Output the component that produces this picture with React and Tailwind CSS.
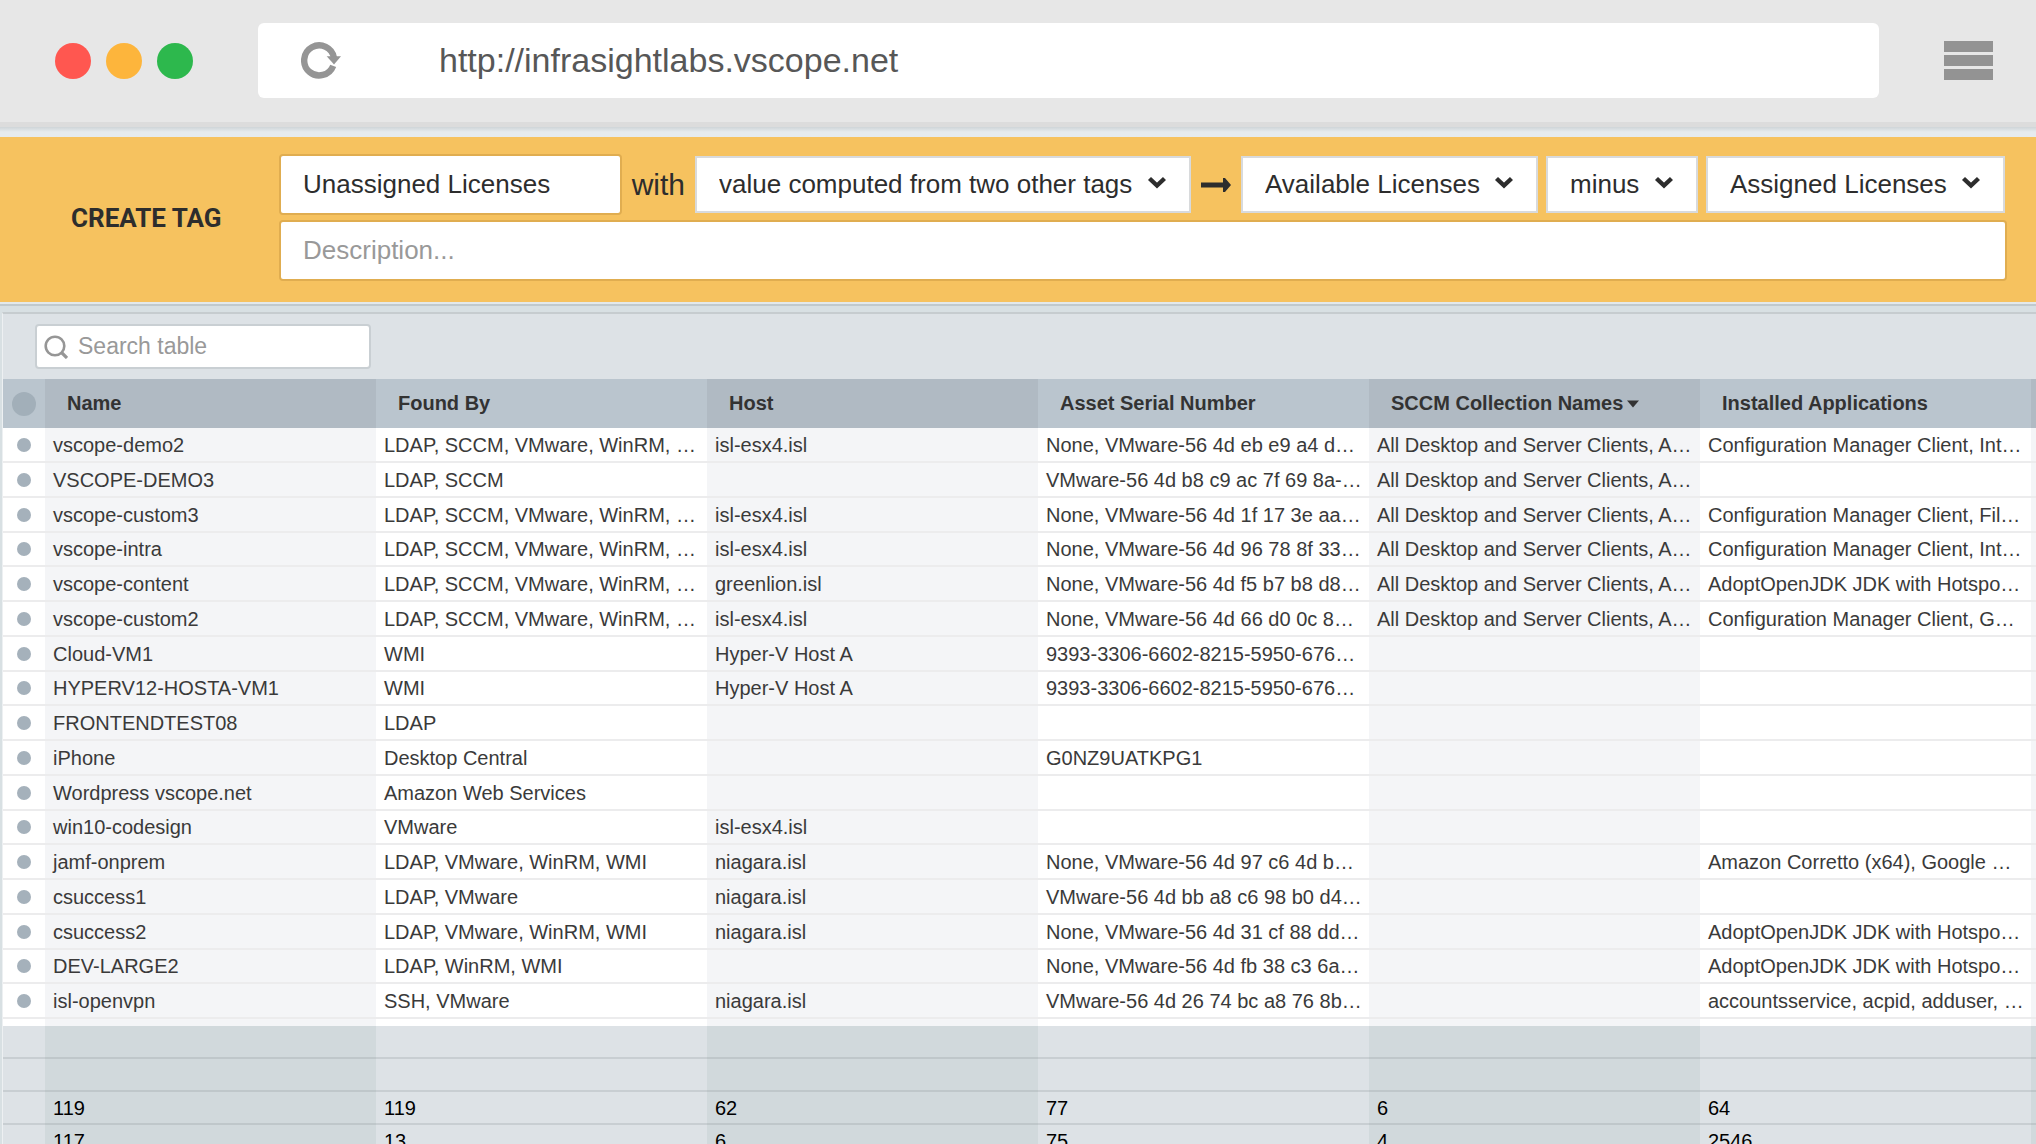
import React, { useState } from "react";

const columns = [
  "Name",
  "Found By",
  "Host",
  "Asset Serial Number",
  "SCCM Collection Names",
  "Installed Applications",
];

const allSources = "LDAP, SCCM, VMware, WinRM, …";
const clients = "All Desktop and Server Clients, A…";
const hotspot = "AdoptOpenJDK JDK with Hotspo…";

const assets = [
  ["vscope-demo2", allSources, "isl-esx4.isl", "None, VMware-56 4d eb e9 a4 d…", clients, "Configuration Manager Client, Int…"],
  ["VSCOPE-DEMO3", "LDAP, SCCM", "", "VMware-56 4d b8 c9 ac 7f 69 8a-…", clients, ""],
  ["vscope-custom3", allSources, "isl-esx4.isl", "None, VMware-56 4d 1f 17 3e aa…", clients, "Configuration Manager Client, Fil…"],
  ["vscope-intra", allSources, "isl-esx4.isl", "None, VMware-56 4d 96 78 8f 33…", clients, "Configuration Manager Client, Int…"],
  ["vscope-content", allSources, "greenlion.isl", "None, VMware-56 4d f5 b7 b8 d8…", clients, hotspot],
  ["vscope-custom2", allSources, "isl-esx4.isl", "None, VMware-56 4d 66 d0 0c 8…", clients, "Configuration Manager Client, G…"],
  ["Cloud-VM1", "WMI", "Hyper-V Host A", "9393-3306-6602-8215-5950-676…", "", ""],
  ["HYPERV12-HOSTA-VM1", "WMI", "Hyper-V Host A", "9393-3306-6602-8215-5950-676…", "", ""],
  ["FRONTENDTEST08", "LDAP", "", "", "", ""],
  ["iPhone", "Desktop Central", "", "G0NZ9UATKPG1", "", ""],
  ["Wordpress vscope.net", "Amazon Web Services", "", "", "", ""],
  ["win10-codesign", "VMware", "isl-esx4.isl", "", "", ""],
  ["jamf-onprem", "LDAP, VMware, WinRM, WMI", "niagara.isl", "None, VMware-56 4d 97 c6 4d b…", "", "Amazon Corretto (x64), Google …"],
  ["csuccess1", "LDAP, VMware", "niagara.isl", "VMware-56 4d bb a8 c6 98 b0 d4…", "", ""],
  ["csuccess2", "LDAP, VMware, WinRM, WMI", "niagara.isl", "None, VMware-56 4d 31 cf 88 dd…", "", hotspot],
  ["DEV-LARGE2", "LDAP, WinRM, WMI", "", "None, VMware-56 4d fb 38 c3 6a…", "", hotspot],
  ["isl-openvpn", "SSH, VMware", "niagara.isl", "VMware-56 4d 26 74 bc a8 76 8b…", "", "accountsservice, acpid, adduser, …"],
];

const totals = [
  ["", "", "", "", "", ""],
  ["", "", "", "", "", ""],
  ["119", "119", "62", "77", "6", "64"],
  ["117", "13", "6", "75", "4", "2546"],
];

function BrowserBar() {
  const [url, setUrl] = useState("http://infrasightlabs.vscope.net");

  return (
    <header className="flex h-[127px] shrink-0 items-center border-b-[5px] border-[#dcdcdc] bg-[#e7e7e7] pb-px pl-[55px] pr-[43px]">
      <div className="flex gap-[15px]">
        <span className="size-9 rounded-full bg-[#ff5750]" />
        <span className="size-9 rounded-full bg-[#fdb53c]" />
        <span className="size-9 rounded-full bg-[#2db84d]" />
      </div>

      <div className="mx-[65px] flex h-[75px] flex-1 items-center rounded-md bg-white pl-[43px]">
        <button aria-label="Reload" className="mr-[98px]">
          <svg width="40" height="37" viewBox="0 0 40 37" fill="none">
            <path d="M33 16A15 15 0 1 0 32.2 23.8" stroke="#959595" strokeWidth="6.4" />
            <path d="M25.7 14.3H40L33 22.4Z" fill="#959595" />
          </svg>
        </button>
        <input
          aria-label="Address"
          value={url}
          onChange={(e) => setUrl(e.target.value)}
          className="min-w-0 flex-1 text-[34px] text-[#575757] outline-none"
        />
      </div>

      <button aria-label="Menu" className="flex flex-col gap-[3px]">
        <span className="h-[11px] w-[49px] bg-[#939393]" />
        <span className="h-[11px] w-[49px] bg-[#939393]" />
        <span className="h-[11px] w-[49px] bg-[#939393]" />
      </button>
    </header>
  );
}

function TagSelect({ label, value }) {
  return (
    <div className="relative shrink-0">
      <select
        aria-label={label}
        defaultValue={value}
        className="block h-[57px] appearance-none border-2 border-[#d8dadc] bg-white pl-[22px] pr-14 text-[26px] text-[#2d2d2d] outline-none"
      >
        <option>{value}</option>
      </select>
      <svg className="pointer-events-none absolute right-6 top-5" width="20" height="14" viewBox="0 0 20 14" fill="none">
        <path d="M2.5 2.5L10 9.5L17.5 2.5" stroke="#2d2d2d" strokeWidth="4.4" />
      </svg>
    </div>
  );
}

function CreateTag() {
  const [name, setName] = useState("Unassigned Licenses");
  const [description, setDescription] = useState("");

  return (
    <section className="flex items-center bg-[#f6c25f] pb-[21px] pl-[71px] pr-[29px] pt-[17px] text-[#2d2d2d]">
      <h1 className="w-52 shrink-0 font-['Roboto',sans-serif] text-[26px] font-bold leading-9">CREATE TAG</h1>
      <div className="flex min-w-0 flex-1 flex-col gap-[5px]">
        <div className="flex items-center gap-2 pr-[2px]">
          <input
            aria-label="Tag name"
            value={name}
            onChange={(e) => setName(e.target.value)}
            className="h-[61px] min-w-0 flex-1 rounded-sm border-2 border-[#e0ad50] bg-white px-[22px] text-[26px] outline-none"
          />
          <span className="px-[2px] text-[30px]">with</span>
          <TagSelect label="Tag type" value="value computed from two other tags" />
          <svg className="mx-[2px] shrink-0" width="30" height="14" viewBox="0 0 30 14">
            <path d="M0 4.6H22V0H24L30 7L24 14H22V9.4H0Z" fill="#2d2d2d" />
          </svg>
          <TagSelect label="First tag" value="Available Licenses" />
          <TagSelect label="Operator" value="minus" />
          <TagSelect label="Second tag" value="Assigned Licenses" />
        </div>
        <input
          aria-label="Description"
          placeholder="Description..."
          value={description}
          onChange={(e) => setDescription(e.target.value)}
          className="h-[61px] rounded-sm border-2 border-[#e0ad50] bg-white px-[22px] text-[26px] outline-none placeholder:text-[#999]"
        />
      </div>
    </section>
  );
}

function AssetTable() {
  return (
    <table className="w-full table-fixed border-separate border-spacing-0 text-left text-xl">
      <colgroup>
        <col className="w-[42px]" />
        {columns.map((column) => (
          <col key={column} className="w-[331px]" />
        ))}
        <col />
      </colgroup>

      <thead className="text-[#333]">
        <tr className="h-[49px]">
          <th className="bg-[#bac5ce]">
            <span className="mx-auto block size-6 rounded-full bg-[#a2afb9]" />
          </th>
          {columns.map((column) => (
            <th key={column} className="bg-[#bac5ce] pb-[2px] pl-[22px] font-bold even:bg-[#b0bac3]">
              {column}
              {column === "SCCM Collection Names" && (
                <svg className="ml-1 inline-block align-middle" width="12" height="8" viewBox="0 0 12 8">
                  <path d="M0 0.5H12L6 7.5Z" fill="#333" />
                </svg>
              )}
            </th>
          ))}
          <th className="bg-[#b0bac3]" />
        </tr>
      </thead>

      <tbody className="text-[#3a3a3a]">
        {assets.map((row) => (
          <tr key={row[0]} className="h-[35px] nth-[4n]:h-[34px]">
            <td className="border-b-2 border-[#ececed] bg-white">
              <span className="mx-auto block size-[14px] rounded-full bg-[#a5b1bb]" />
            </td>
            {row.map((cell, i) => (
              <td key={i} className="border-b-2 border-[#ececed] bg-white pl-2 whitespace-nowrap even:bg-[#f4f5f7]">
                {cell}
              </td>
            ))}
            <td className="border-b-2 border-[#ececed] bg-[#f4f5f7]" />
          </tr>
        ))}
        <tr className="h-[7px]">
          <td className="bg-white" />
          {columns.map((column) => (
            <td key={column} className="bg-white even:bg-[#f4f5f7]" />
          ))}
          <td className="bg-[#f4f5f7]" />
        </tr>
      </tbody>

      <tfoot className="text-black">
        {totals.map((row, r) => (
          <tr key={r} className="h-[33px]">
            <td className="border-b-2 border-[#c8ced2] bg-[#dde2e6]" />
            {row.map((cell, i) => (
              <td key={i} className="border-b-2 border-[#c8ced2] bg-[#dde2e6] pl-2 even:border-[#bfc7ca] even:bg-[#d1d9dc]">
                {cell}
              </td>
            ))}
            <td className="border-b-2 border-[#bfc7ca] bg-[#d1d9dc]" />
          </tr>
        ))}
      </tfoot>
    </table>
  );
}

function App() {
  const [search, setSearch] = useState("");

  return (
    <div className="flex h-screen flex-col overflow-hidden bg-[#d8e0e3] font-['Liberation_Sans',sans-serif]">
      <BrowserBar />
      <div className="h-[10px] shrink-0 bg-linear-to-b from-[#cfd5d8] to-[#e6ebee] to-50%" />
      <CreateTag />

      <div className="mb-[6px] h-1 shrink-0 border-b-2 border-[#c0c9cd] bg-[#e3e9eb]" />

      <main className="ml-[2px] flex-1 border-l border-t-2 border-l-[#edf0f2] border-t-[#c6cccf] bg-[#dde2e6]">
        <div className="px-8 py-[10px]">
          <label className="flex h-[45px] w-[336px] items-center gap-[10px] rounded-sm border-2 border-[#c9cfd3] bg-white pl-[7px]">
            <svg width="24" height="24" viewBox="0 0 24 24" fill="none" stroke="#969696" strokeWidth="2.6">
              <circle cx="11" cy="11" r="9.3" />
              <path d="M17.5 17.5L23 23" strokeWidth="3.2" />
            </svg>
            <input
              aria-label="Search table"
              placeholder="Search table"
              value={search}
              onChange={(e) => setSearch(e.target.value)}
              className="min-w-0 flex-1 text-[23px] outline-none placeholder:text-[#999]"
            />
          </label>
        </div>
        <AssetTable />
      </main>
    </div>
  );
}

export default App;
